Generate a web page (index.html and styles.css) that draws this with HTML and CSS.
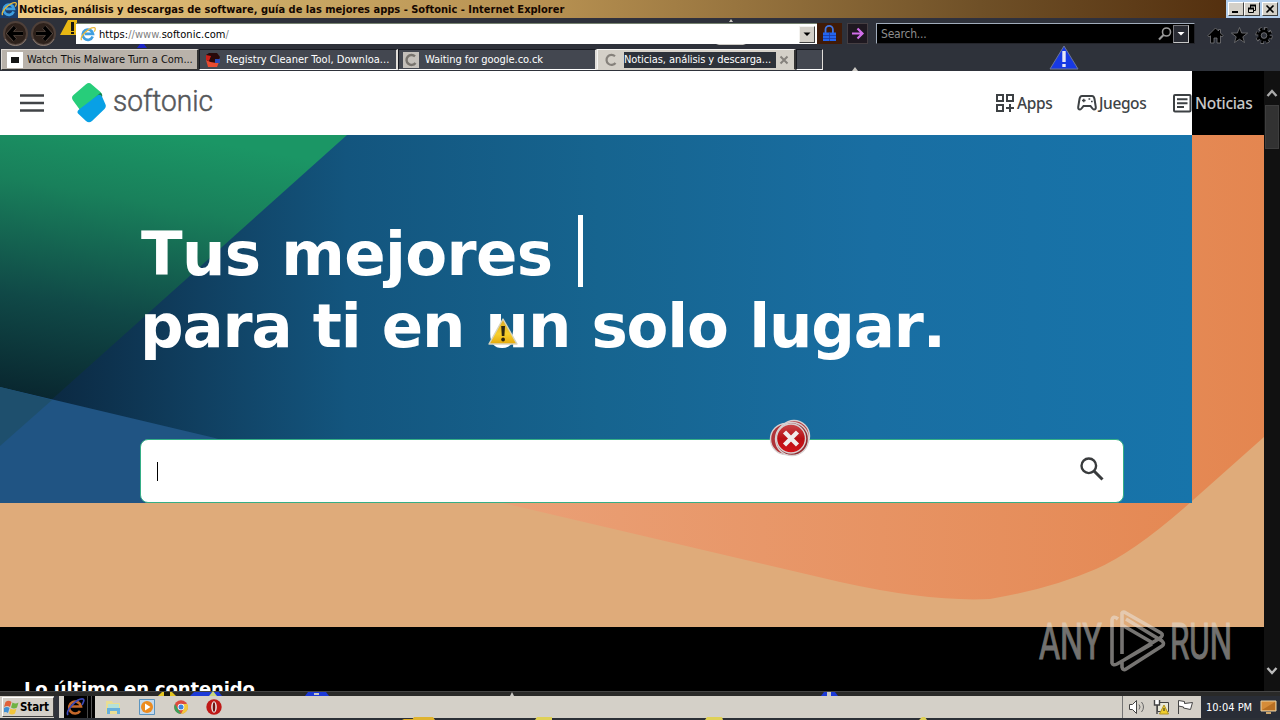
FILE: index.html
```html
<!DOCTYPE html>
<html lang="es">
<head>
<meta charset="utf-8">
<title>Noticias, análisis y descargas de software - Softonic</title>
<link rel="stylesheet" href="styles.css">
</head>
<body>
<svg class="defs" width="0" height="0">
  <defs>
    <linearGradient id="gold" x1="0" y1="0" x2="0" y2="1"><stop offset="0" stop-color="#d9a929"/><stop offset=".6" stop-color="#f7cf2c"/><stop offset="1" stop-color="#e3a80c"/></linearGradient>
    <linearGradient id="red" x1="0" y1="0" x2="0" y2="1"><stop offset="0" stop-color="#c9484a"/><stop offset=".5" stop-color="#b80f14"/><stop offset="1" stop-color="#d3141a"/></linearGradient>
    <symbol id="ie" viewBox="0 0 16 16">
      <path d="M12.7 10.6A5.2 5.2 0 1 1 13 7.900H4.600" fill="none" stroke="#3f9fe0" stroke-width="2.600"/>
      <path d="M1.600 14.200C-.6 10.700 9.400.8 14.400 1.600c1.500.5.9 2.600-.2 4" fill="none" stroke="#e9b93c" stroke-width="1.300"/>
    </symbol>
    <symbol id="warn" viewBox="0 0 30 28">
      <path d="M15 1 29 26H1z" fill="url(#gold)" stroke="#d8d4bd" stroke-width="1.400" stroke-linejoin="round"/>
      <path d="M13.200 8h3.800l-.6 10h-2.600z" fill="#2b2410"/><circle cx="15.100" cy="21.500" r="1.900" fill="#2b2410"/>
    </symbol>
  </defs>
</svg>
<div class="screen">
  <header class="titlebar">
    <span class="title-icon"><svg width="16" height="16"><use href="#ie"/></svg></span>
    <span class="title">Noticias, análisis y descargas de software, guía de las mejores apps - Softonic - Internet Explorer</span>
    <span class="winbtns">
      <i class="wb"><svg width="14" height="12"><path d="M3 9h6" stroke="#000" stroke-width="2"/></svg></i>
      <i class="wb"><svg width="14" height="12"><path d="M5.500 5V2.500h5v5H8" fill="none" stroke="#000"/><path d="M5 2.500h6M3 5.500h6" stroke="#000" stroke-width="2"/><path d="M3.500 5.500h5v4h-5z" fill="none" stroke="#000"/></svg></i>
      <i class="wb last"><svg width="14" height="12"><path d="m3.500 2.500 7 7m0-7-7 7" stroke="#000" stroke-width="1.600"/></svg></i>
    </span>
  </header>

  <div class="toolbar">
    <svg class="navs" width="58" height="28" viewBox="0 0 58 28">
      <g fill="#2d211b" stroke="#4f4039" stroke-width="2"><circle cx="15.500" cy="14.500" r="11.500"/><circle cx="43.500" cy="14.500" r="11.500"/></g>
      <g fill="none" stroke="#8a7d76"><path d="M5 20a11.800 11.800 0 0 0 21 0M33 20a11.800 11.800 0 0 0 21 0"/></g>
      <g fill="none" stroke="#6b5b52" stroke-width="4.600"><path d="M23 14.500H9M15 8l-6 6.500 6 6.500M36 14.500h14M44 8l6 6.500-6 6.500"/></g>
      <g fill="none" stroke="#000" stroke-width="3.400"><path d="M23 14.500H9M15 8l-6 6.500 6 6.500M36 14.500h14M44 8l6 6.500-6 6.500"/></g>
    </svg>
    <svg class="half-warn" width="17" height="17" viewBox="0 0 17 17"><path d="M0 16 8 1h9v15z" fill="#e8b713"/><path d="M11 3h3v9h-3zM11 13h3v2h-3z" fill="#191712"/></svg>
    <div class="address">
      <svg width="16" height="16"><use href="#ie"/></svg>
      <span class="url">https:<em>//www.</em>softonic.com<em>/</em></span>
      <i class="drop"><svg width="14" height="14"><path d="M3.500 5.500h7L7 9z" fill="#000"/></svg></i>
    </div>
    <span class="lock"><svg width="25" height="21"><path d="M8.500 10V6.500a3.700 3.700 0 0 1 7.400 0V10" fill="none" stroke="#4276e2" stroke-width="1.800"/><path d="M6 9.500h13V18H6z" fill="#2365f0"/><path d="M6 12.500h13M6 15.500h13M12.500 9v9" stroke="#1a3ba5" stroke-width=".8"/></svg></span>
    <span class="go"><svg width="20" height="20"><path d="M4 9.500h10M9.500 4.500l5 5-5 5" fill="none" stroke="#d16ee8" stroke-width="2.200"/></svg></span>
    <div class="search"><span>Search...</span>
      <svg width="16" height="16"><circle cx="9.500" cy="6" r="4" fill="none" stroke="#999" stroke-width="1.600"/><path d="m6.500 9-4.500 4.500" stroke="#999" stroke-width="2.200"/></svg>
      <i class="drop dark"><svg width="14" height="16"><path d="M3.500 6h7L7 9.500z" fill="#fff"/></svg></i>
    </div>
    <svg class="tools" width="72" height="20" viewBox="0 0 72 20">
      <g fill="#000" stroke="#77777a" stroke-width=".8">
        <path d="M9.500 2 2 9.500 3 11l1.500-1.200V17H8v-5h3v5h3.500V9.800L16 11l1-1.500-2.500-2.500V3.500h-2V5z"/>
        <path d="m33.500 1.500 2.100 5.500 6 .1-4.800 3.700 1.700 5.700-5-3.300-5 3.300 1.700-5.700-4.800-3.700 6-.1z"/>
      </g>
      <circle cx="58" cy="9.500" r="6.600" fill="none" stroke="#77777a" stroke-width="4" stroke-dasharray="3.100 2.083"/>
      <circle cx="58" cy="9.500" r="6.300" fill="none" stroke="#000" stroke-width="3.200" stroke-dasharray="2.200 2.748" stroke-dashoffset="-.4"/>
      <circle cx="58" cy="9.500" r="4.400" fill="none" stroke="#000" stroke-width="2.600"/><circle cx="58" cy="9.500" r="2.800" fill="#2e313a" stroke="#77777a" stroke-width=".8"/>
    </svg>
  </div>

  <nav class="tabs">
    <div class="tab light"><svg width="16" height="16"><path fill="#fff" d="M0 0h16v16H0z"/><path fill="#161616" d="M4 5h8v6H4z"/></svg><span class="t1">Watch This Malware Turn a Com...</span></div>
    <div class="tab"><svg width="16" height="16"><path d="M1 3l3-2h8l3 4-3 7-9 1z" fill="#28090a"/><path d="M1 8q7 4 13 2l-2 5H3z" fill="#e84b31"/><path d="M1 3l5 1-2 5-3-1z" fill="#cb2018"/><path d="M10 7h5v4h-5z" fill="#2849b4"/></svg><span class="t2">Registry Cleaner Tool, Downloa...</span></div>
    <div class="tab"><i class="spin"><svg width="16" height="16"><path d="M12 4.300A5 5 0 1 0 12.500 11" fill="none" stroke="#77736d" stroke-width="2.400"/></svg></i><span class="t3">Waiting for google.co.ck</span></div>
    <div class="tab active"><svg width="16" height="16"><path d="M12 4.300A5 5 0 1 0 12.500 11" fill="none" stroke="#85817b" stroke-width="2.200"/></svg><span class="t4">Noticias, análisis y descarga...</span><svg class="close" width="10" height="10"><path d="m1.500 1.500 7 7m0-7-7 7" stroke="#85817c" stroke-width="2"/></svg></div>
    <div class="tab new"></div>
  </nav>

  <main class="view">
    <div class="page">
      <header class="site">
        <svg class="burger" width="24" height="18"><path d="M0 1.500h24M0 9h24M0 16.500h24" stroke="#414447" stroke-width="2.300"/></svg>
        <svg class="mark" width="34" height="42" viewBox="0 0 34 42">
          <path d="M1.500 13 14 2.200q3-2.200 5.500 0L28.500 10q1.500 1.500 1.500 3L10 29.500l-2-1.500-7.300-10q-1.700-3 .8-5z" fill="#27cd7a"/>
          <path d="M7 27.500 26 13q3-1.500 4 1.500l3.500 8q1 2.500-1 4.500L20 39q-3 2.400-6 0l-8-7.500q-1.500-2 1-4z" fill="#08a0e5"/>
          <path d="m20 17.700 8.500-6.900Q31 12.500 30 15q-1-3-4-2z" fill="#13814f"/>
        </svg>
        <svg class="word" width="106" height="44"><text x="1" y="32.500" textLength="100" lengthAdjust="spacingAndGlyphs">softonic</text></svg>
        <div class="links">
          <span class="link l1"><svg width="20" height="20"><path d="M2 2h6v6H2zM12 2h6v6h-6zM2 12h6v6H2zM15 11v8M11 15h8" fill="none" stroke="#3d4144" stroke-width="2"/></svg><b>Apps</b></span>
          <span class="link l2"><svg width="20" height="18"><path d="M5 2h10q2 0 2.500 3l1.300 8q.2 2.500-1.800 2.500-1 0-3.500-3.500h-7Q4 15.500 3 15.500q-2 0-1.800-2.500l1.300-8Q3 2 5 2z" fill="none" stroke="#3d4144" stroke-width="2"/><path d="M5 6.500h3.600M6.800 4.700v3.600M11.500 5h1.700M14 7.500h1.700" stroke="#3d4144" stroke-width="1.300"/></svg><b>Juegos</b></span>
          <span class="link l3"><svg width="20" height="20"><rect x="1" y="2" width="16.500" height="16.500" rx="1" fill="none" stroke="#3d4144" stroke-width="2"/><path d="M4 6.300h10.500M4 10.200h10.500M4 14h7" stroke="#3d4144" stroke-width="1.900"/></svg><b>Noticias</b></span>
        </div>
      </header>
      <section class="hero">
        <svg class="art" width="1264" height="492" viewBox="0 135 1264 492">
          <defs>
            <linearGradient id="blue" gradientUnits="userSpaceOnUse" x1="50" y1="0" x2="1192" y2="0"><stop offset="0" stop-color="#0b2942"/><stop offset=".13" stop-color="#103f60"/><stop offset=".26" stop-color="#13557e"/><stop offset=".48" stop-color="#16648f"/><stop offset=".72" stop-color="#196ea2"/><stop offset="1" stop-color="#1774aa"/></linearGradient>
            <linearGradient id="green" gradientUnits="userSpaceOnUse" x1="90" y1="120" x2="40" y2="400"><stop offset="0" stop-color="#1b9665"/><stop offset=".25" stop-color="#19805b"/><stop offset=".65" stop-color="#104947"/><stop offset="1" stop-color="#09262f"/></linearGradient>
            <linearGradient id="orange" gradientUnits="userSpaceOnUse" x1="500" y1="0" x2="1264" y2="0"><stop offset="0" stop-color="#eaa076"/><stop offset="1" stop-color="#e48650"/></linearGradient>
          </defs>
          <path fill="#dfab7a" d="M0 135h1264v492H0z"/>
          <path fill="url(#orange)" d="M490 500 840 582Q930 602 990 599 1050 589 1096 569 1135 552 1192 501L1264 437V135H490z"/>
          <path fill="url(#blue)" d="M0 135h1192v368H0z"/>
          <path fill="url(#green)" d="M0 135h347L0 446z"/>
          <path fill="#205483" d="M0 387 215 438 490 503H0z"/>
          <path fill="url(#blue)" d="m215 438 977 0v65H490z"/>
          <path fill="#1e4f6d" d="m0 387 52 13L0 446z"/>
        </svg>
        <div class="hero-in">
          <h1><span class="h1a">Tus mejores <i></i></span><span class="h1b">para ti en un solo lugar.</span></h1>
          <div class="box"><i class="caret"></i><svg width="26" height="26"><circle cx="9.800" cy="9.800" r="7.300" fill="none" stroke="#393b3d" stroke-width="2.400"/><path d="m15 15 8.500 8.500" stroke="#393b3d" stroke-width="3"/></svg></div>
        </div>
      </section>
      <section class="latest"><h2>Lo último en contenido</h2></section>
    </div>
    <aside class="scroll">
      <svg width="16" height="34"><path d="m3.500 25 4.500-5 4.500 5" fill="none" stroke="#aaa" stroke-width="2.400"/></svg>
      <i class="thumb"></i>
      <svg class="down" width="16" height="34"><path d="m3.500 11 4.500 5 4.500-5" fill="none" stroke="#bbb" stroke-width="2.400"/></svg>
    </aside>
  </main>

  <footer class="taskbar">
    <div class="start"><svg width="16" height="16"><path d="M1.500 3q3-2.500 6 0L6 8Q3.500 6 0 8z" fill="#e0613a"/><path d="M8.500 3.500q3 2 6 0L13 8.500q-3 2-6 0z" fill="#6eb344"/><path d="M0 9q3-2 5.500 0L4 14q-2.500-2-5 0z" fill="#3f8fd3"/><path d="M6.500 9.500q3 2 6 0L11 14.500q-3 2-6 0z" fill="#f2c53b"/></svg><b>Start</b></div>
    <div class="quick">
      <span class="qie"><svg width="20" height="20" viewBox="0 0 20 20"><path d="M15 14A6 6 0 1 1 16 9.500H6" fill="none" stroke="#c5682a" stroke-width="2.600"/><path d="M3 18C0 14 12 1 18 2c2 1 0 4-1 6" fill="none" stroke="#3d49b8" stroke-width="1.700"/></svg></span>
      <svg class="q1" width="18" height="18"><path d="M2 3h6l1 2h7v11H2z" fill="#eadd94"/><path d="M4 6h11v5H4z" fill="#b4e1d8"/><path d="M3 16v-6h13v6h-3v-3H6v3z" fill="#67afdc"/></svg>
      <svg class="q2" width="16" height="16"><path d="M.5.500h15v15H.5z" fill="#c2d9ed" stroke="#5b94bf"/><circle cx="8" cy="8" r="6" fill="#ec8b1f"/><path d="m6 4.500 5.500 3.500L6 11.500z" fill="#fff"/></svg>
      <svg class="q3" width="14" height="14"><circle cx="7" cy="7" r="6.800" fill="#dc4b3e"/><path d="M.9 4 7 14A7 7 0 0 1 .9 4z" fill="#38a15a"/><path d="M7 4h6.300A7 7 0 0 1 7 14l3-6z" fill="#f2c83c"/><circle cx="7" cy="7" r="3.300" fill="#fff"/><circle cx="7" cy="7" r="2.500" fill="#3d83de"/></svg>
      <svg class="q4" width="16" height="16"><circle cx="8" cy="8" r="7.700" fill="#bf1917"/><ellipse cx="8" cy="8" rx="2.800" ry="5.700" fill="#eee"/><ellipse cx="8" cy="8" rx="1.300" ry="4.700" fill="#721311"/></svg>
    </div>
    <div class="tray">
      <svg width="78" height="20"><g fill="#fff" stroke="#444"><path d="M6.500 7.500h3l4-4v13l-4-4h-3z"/><path d="M16 7.500q2 2.500 0 5M18.500 5q4 5 0 10" fill="none" stroke="#666"/><path d="M34.500 5.500h11v9h-11z" fill="#e9e8d7"/><path d="M31.500 3v5h5V3M34 8v9" stroke-width="1.400"/><path d="m41 8 4.500 9h-9z" fill="#f0cf2c" stroke="#b19320"/><path d="M41 11v3" stroke="#222"/><path d="M55.500 17V3.500l6 1v2l8-1-2 7-7-1.500v-1l-5-1"/></g></svg>
    </div>
    <div class="clock"><span>10:04 PM</span><svg width="18" height="16"><path d="M1 2h15v10H1z" fill="#d58c39" stroke="#e8d2a8"/><path d="m2 11 13-8v8z" fill="#b86f23"/><path d="M6 13h5v2H6z" fill="#cda66d"/></svg></div>
  </footer>

  <svg class="overlay" width="1280" height="720" viewBox="0 0 1280 720">
    <use href="#warn" x="488" y="318" width="30" height="28"/>
    <g stroke="#d8d2d2" stroke-width="1.400"><circle cx="786" cy="439" r="15.500" fill="#af3439"/><circle cx="794" cy="436" r="15.500" fill="#b63d40"/><circle cx="792" cy="439" r="16.500" fill="#912b30"/><circle cx="791" cy="438.500" r="14.500" fill="url(#red)"/></g>
    <path d="m784.500 432 13 13m0-13-13 13" stroke="#f0eceb" stroke-width="4.400"/>
    <path d="M1064 46 1078 69h-28z" fill="#1739e4" stroke="#6d7696"/><path d="M1064 51v11M1064 64v3" stroke="#e7e7f5" stroke-width="3.400"/>
    <path d="M729 22l2-3 2 3zM852 71l3-4 3 4zM716 44h30l-3 1h-24z" fill="#cbc8c3"/>
    <path d="M137 48l3-4h4l3 4z" fill="#1b24c5"/>
    <path d="M158 696l4-4h10l4 4z" fill="#e3c520"/><path d="M164 692h6v4h-6z" fill="#17170d"/>
    <path d="M190 696l4-4h25l3 4zM305 696l3-4h18l3 4zM821 696l3-4h11l3 4z" fill="#1b39d8"/><path d="M314 693h5v2h-5zM827 692h4v4h-4zM510 696l2-4 2 4z" fill="#c9c8c4"/>
    <path d="M209 696l4-5 4 5z" fill="#c9d67a"/>
    <path d="M402 720l2-1h18v1z" fill="#e0ac20"/><path d="M412 720l2-3h19l2 3z" fill="#dfb32f"/>
    <path d="M511 720l2-3h11l2 3zM657 720l3-3h12l2 3z" fill="none"/>
    <path d="M535 720l2-3h15v3zM705 720l2-3h15l1 3zM919 720l3-3h3l2 3z" fill="#dfd157"/>
    <g opacity=".5"><g class="wm"><text x="1039" y="659" textLength="63" lengthAdjust="spacingAndGlyphs">ANY</text><text x="1170" y="659" textLength="62" lengthAdjust="spacingAndGlyphs">RUN</text></g>
    <path d="M1122 654V613q1-2 4 0l35 20q3 2-1 5l-36 22M1122 625l31 18m-35-24q-5-4-6 1v43q1 3 5 1l35-20M1122 661v6q1 4 4 2l36-23q3-2 0-5l-36-22" fill="none" stroke="#ebe8e4" stroke-width="3.600"/></g>
  </svg>
</div>
</body>
</html>
```
FILE: styles.css
```css
* { box-sizing: border-box; }
body { margin: 0; background: #000; overflow: hidden; }
svg { display: block; flex: none; }
i, em { font-style: normal; }
.defs { position: absolute; }
.screen { position: relative; width: 1280px; height: 720px; display: flex; flex-direction: column; overflow: hidden; font-family: "DejaVu Sans Condensed", "DejaVu Sans", sans-serif; font-size: 11px; }
.titlebar { height: 18px; flex: none; display: flex; align-items: center; background: linear-gradient(90deg, #f1cd83 0, #cba965 280px, #b58f50 560px, #6f5027 980px, #54300f 1226px); }
.title-icon { width: 18px; height: 18px; background: #1a3d6c; padding: 1px; }
.title { font-weight: bold; color: #140700; white-space: nowrap; margin-left: 1px; letter-spacing: .005px; }
.winbtns { margin-left: auto; width: 54px; height: 18px; padding: 2px 2px; display: flex; background: #b4cfed; }
.wb { width: 16px; height: 14px; background: #d4d0c8; border: 1px solid #fff; border-right-color: #404040; border-bottom-color: #404040; }
.wb.last { margin-left: 2px; }
.toolbar { height: 31px; flex: none; display: flex; align-items: flex-start; background: #2e313a; padding-top: 4px; border-top: 1px solid #30303e; }
.navs { margin-top: -4px; }
.half-warn { margin: -4px 0 0 2px; }
.address { margin-left: -1px; width: 741px; height: 21px; display: flex; align-items: center; background: #fff; border-top: 1px solid #75826f; padding: 0 2px 0 4px; }
.url { margin-left: 3px; color: #000; white-space: nowrap; letter-spacing: .06px; }
.url em { color: #808080; }
.drop { margin-left: auto; width: 16px; height: 17px; background: #d4d0c8; border: 1px solid #f4f3f0; border-right-color: #404040; border-bottom-color: #404040; }
.lock { width: 25px; height: 21px; background: #401b08; }
.go { margin-left: 5px; width: 21px; height: 21px; background: #1e1820; border: 1px solid #453e42; }
.search { margin-left: 8px; width: 319px; height: 21px; background: #000; border: 1px solid #a1acbb; border-right-color: #24252b; border-bottom-color: #24252b; display: flex; align-items: center; padding: 0 5px 0 4px; color: #8d8d8d; font-size: 12px; letter-spacing: -.2px; }
.search svg:first-of-type { margin-left: auto; }
.search .dark { margin-left: 0; background: #292b33; border-color: #77777c #c6c6c6 #c6c6c6 #77777c; height: 18px; }
.search .dark svg { margin-left: 0; }
.tools { margin: 3px 0 0 11px; }
.tabs { height: 22px; flex: none; display: flex; background: #2e323a; padding: 0 0 1px 1px; font-size: 11px; color: #fff; white-space: nowrap; }
.tab { width: 199px; height: 21px; background: #434750; border: 1px solid #171920; border-right: 2px solid #e1ded9; border-bottom-color: #fff; display: flex; align-items: center; padding-left: 5px; }
.tab span { margin-left: 5px; }
.light { width: 198px; background: #b9b2aa; border-color: #dedad5 #333 #333 #dedad5; }
.light .t1 { color: #111; margin-left: 4px; letter-spacing: -.04px; }
.tab .t2 { letter-spacing: .02px; }
.tab .t3 { margin-left: 6px; letter-spacing: -.05px; }
.spin { background: #c4c0ba; margin-left: -1px; }
.active { background: #d4d0c8; border-color: #f5f4f2 #333 #d4d0c8 #f5f4f2; }
.active .t4 { background: #2d323a; height: 16px; line-height: 16px; width: 152px; letter-spacing: -.08px; }
.close { margin-left: 3px; }
.new { width: 27px; border-right-width: 1px; }
.view { height: 620px; flex: none; display: flex; }
.page { width: 1264px; overflow: hidden; background: #000; display: flex; flex-direction: column; }
.site { height: 64px; flex: none; display: flex; align-items: center; background: linear-gradient(90deg, #fff 1192px, #000 1192px); padding-left: 20px; }
.mark { margin-left: 28px; }
.word { margin-left: 6px; margin-top: -6px; overflow: visible; font: 300 29px Roboto, sans-serif; fill: #55575a; stroke: #55575a; stroke-width: .5px; }
.links { display: flex; margin-left: 777px; font: 500 15.500px "Noto Sans", sans-serif; color: #404346; }
.link { display: flex; align-items: center; white-space: nowrap; height: 22px; }
.link b { font-weight: 500; margin-left: 2px; letter-spacing: -.4px; }
.l1 { width: 82px; } .l2 { width: 96px; }
.l3 b { color: #c8c8c8; letter-spacing: -.3px; }
.hero { height: 492px; flex: none; display: grid; }
.hero > * { grid-area: 1 / 1; }
.hero-in { padding: 80px 0 0 140px; }
h1 { margin: 0; display: flex; flex-direction: column; color: #fff; font: bold 61px/77px "DejaVu Sans", sans-serif; font-kerning: none; height: 224px; letter-spacing: -1.150px; word-spacing: 1.200px; white-space: nowrap; }
.h1a, .h1b { height: 72px; }
.h1a { display: flex; white-space: pre; letter-spacing: -.6px; padding-left: 1px; word-spacing: 0; }
.h1a i { width: 5px; background: #fff; height: 72px; margin-left: 5px; }
.box { width: 984px; height: 64px; background: #fff; border: 1px solid #35ae86; border-radius: 8px; display: flex; align-items: center; justify-content: space-between; padding: 0 18px 4px 16px; }
.caret { width: 1px; height: 19px; background: #000; margin-top: 5px; }
.latest { height: 64px; flex: none; padding: 50px 0 0 24px; overflow: hidden; }
h2 { margin: 0; color: #fff; font: bold 18px/24px "DejaVu Sans", sans-serif; letter-spacing: -.12px; white-space: nowrap; }
.scroll { width: 16px; background: #111; display: flex; flex-direction: column; }
.thumb { width: 14px; margin-left: 1px; height: 44px; background: #323232; border: 1px solid #3e3e3e; }
.down { margin-top: auto; }
.taskbar { margin-top: 1px; height: 28px; flex: none; background: #d4d0c8; border-top: 4px solid #292928; border-bottom: 2px solid #2c3037; display: flex; align-items: center; box-shadow: 0 -1px #444; }
.start { width: 52px; height: 20px; margin-left: 2px; display: flex; align-items: center; border: 1px solid #fff; border-right-color: #404040; border-bottom-color: #404040; padding-left: 1px; }
.start b { color: #000; letter-spacing: -.1px; margin-left: 0; font-size: 11.500px; }
.quick { height: 22px; display: flex; align-items: center; border-left: 5px solid #30333b; margin-left: 0; }
.qie { width: 36px; height: 22px; background: linear-gradient(90deg, #d4d0c8 5px, #000 5px 28px, #484848 28px 29px, #000 29px 32px, #555 32px 33px, #000 33px); padding: 1px 0 0 6px; }
.q1 { margin-left: 9px; } .q2 { margin-left: 17px; } .q3 { margin-left: 19px; } .q4 { margin-left: 18px; }
.tray { margin-left: auto; border-left: 1px solid #747474; width: 79px; height: 22px; padding-top: 1px; }
.clock { width: 79px; height: 22px; background: #292d36; color: #fff; display: flex; align-items: center; padding-left: 5px; justify-content: space-between; white-space: nowrap; padding-right: 2px; font-size: 11px; }
.overlay { position: absolute; left: 0; top: 0; pointer-events: none; }
.wm { font: 50px "Roboto", sans-serif; fill: #e4e1dd; stroke: #e4e1dd; stroke-width: 1px; }
```
